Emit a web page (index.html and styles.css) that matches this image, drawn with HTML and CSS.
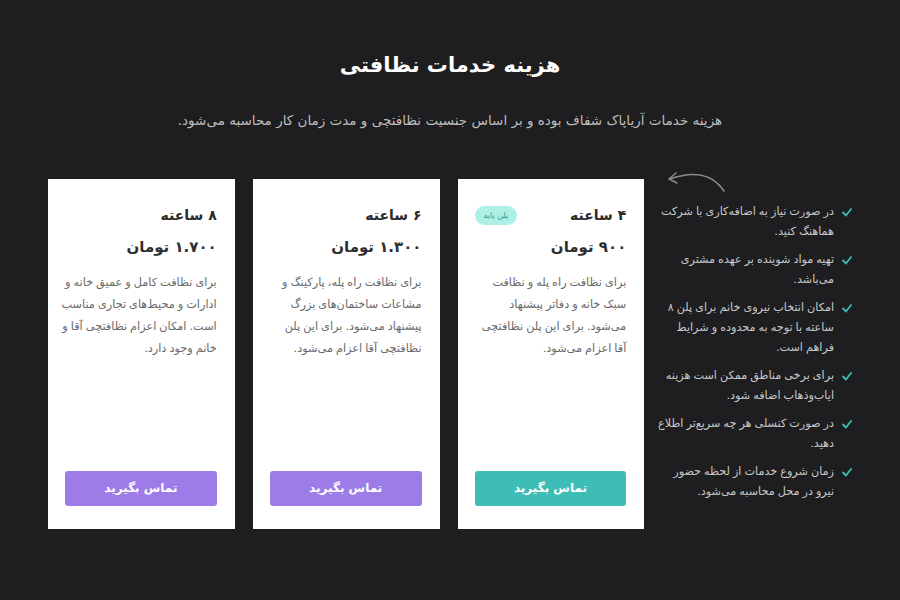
FILE: index.html
```html
<!DOCTYPE html>
<html lang="fa" dir="rtl">
<head>
<meta charset="utf-8">
<link rel="stylesheet" href="styles.css">
</head>
<body>
<div class="page">
  <h1 class="title">هزینه خدمات نظافتی</h1>
  <p class="subtitle">هزینه خدمات آریاپاک شفاف بوده و بر اساس جنسیت نظافتچی و مدت زمان کار محاسبه می‌شود.</p>
  <div class="row">
    <div class="notes">
      <svg class="arrow" width="70" height="30" viewBox="0 0 70 30">
        <path d="M62 24 C50 6 30 4 8 12" fill="none" stroke="#8a8a8a" stroke-width="1.6" stroke-linecap="round"/>
        <path d="M14 6 L7 12 L15 16" fill="none" stroke="#8a8a8a" stroke-width="1.6" stroke-linecap="round" stroke-linejoin="round"/>
      </svg>
      <ul class="list">
        <li><svg class="check" width="10" height="20" viewBox="0 0 10 20"><path d="M1 10.5 L4 13.5 L9 7" fill="none" stroke="#3dbdb0" stroke-width="1.8" stroke-linecap="round" stroke-linejoin="round"/></svg><span>در صورت نیاز به اضافه‌کاری با شرکت هماهنگ کنید.</span></li>
        <li><svg class="check" width="10" height="20" viewBox="0 0 10 20"><path d="M1 10.5 L4 13.5 L9 7" fill="none" stroke="#3dbdb0" stroke-width="1.8" stroke-linecap="round" stroke-linejoin="round"/></svg><span>تهیه مواد شوینده بر عهده مشتری می‌باشد.</span></li>
        <li><svg class="check" width="10" height="20" viewBox="0 0 10 20"><path d="M1 10.5 L4 13.5 L9 7" fill="none" stroke="#3dbdb0" stroke-width="1.8" stroke-linecap="round" stroke-linejoin="round"/></svg><span>امکان انتخاب نیروی خانم برای پلن ۸ ساعته با توجه به محدوده و شرایط فراهم است.</span></li>
        <li><svg class="check" width="10" height="20" viewBox="0 0 10 20"><path d="M1 10.5 L4 13.5 L9 7" fill="none" stroke="#3dbdb0" stroke-width="1.8" stroke-linecap="round" stroke-linejoin="round"/></svg><span>برای برخی مناطق ممکن است هزینه ایاب‌وذهاب اضافه شود.</span></li>
        <li><svg class="check" width="10" height="20" viewBox="0 0 10 20"><path d="M1 10.5 L4 13.5 L9 7" fill="none" stroke="#3dbdb0" stroke-width="1.8" stroke-linecap="round" stroke-linejoin="round"/></svg><span>در صورت کنسلی هر چه سریع‌تر اطلاع دهید.</span></li>
        <li><svg class="check" width="10" height="20" viewBox="0 0 10 20"><path d="M1 10.5 L4 13.5 L9 7" fill="none" stroke="#3dbdb0" stroke-width="1.8" stroke-linecap="round" stroke-linejoin="round"/></svg><span>زمان شروع خدمات از لحظه حضور نیرو در محل محاسبه می‌شود.</span></li>
      </ul>
    </div>
    <div class="card">
      <div class="head"><h3 class="hours">۴ ساعته</h3><span class="badge">پلن پایه</span></div>
      <div class="price">۹۰۰ تومان</div>
      <p class="desc">برای نظافت راه پله و نظافت<br>سبک خانه و دفاتر پیشنهاد<br>می‌شود. برای این پلن نظافتچی<br>آقا اعزام می‌شود.</p>
      <a class="btn teal">تماس بگیرید</a>
    </div>
    <div class="card">
      <div class="head"><h3 class="hours">۶ ساعته</h3></div>
      <div class="price">۱.۳۰۰ تومان</div>
      <p class="desc">برای نظافت راه پله، پارکینگ و<br>مشاعات ساختمان‌های بزرگ<br>پیشنهاد می‌شود. برای این پلن<br>نظافتچی آقا اعزام می‌شود.</p>
      <a class="btn purple">تماس بگیرید</a>
    </div>
    <div class="card">
      <div class="head"><h3 class="hours">۸ ساعته</h3></div>
      <div class="price">۱.۷۰۰ تومان</div>
      <p class="desc">برای نظافت کامل و عمیق خانه و<br>ادارات و محیط‌های تجاری مناسب<br>است. امکان اعزام نظافتچی آقا و<br>خانم وجود دارد.</p>
      <a class="btn purple">تماس بگیرید</a>
    </div>
  </div>
</div>
</body>
</html>
```
FILE: styles.css
```css
html, body {
  margin: 0;
  padding: 0;
  background: #1e1e20;
}
body {
  font-family: "DejaVu Sans", "Noto Sans", sans-serif;
  direction: rtl;
}
.page {
  width: 900px;
  height: 600px;
  padding-top: 40px;
  box-sizing: border-box;
}
.title {
  margin: 0;
  text-align: center;
  color: #ffffff;
  font-size: 21px;
  line-height: 50px;
  font-weight: bold;
}
.subtitle {
  margin: 18px 0 0;
  text-align: center;
  color: #bdbdbd;
  font-size: 13.5px;
  line-height: 24px;
}
.row {
  display: flex;
  flex-direction: row;
  gap: 18px;
  margin: 47px 48px 0 48px;
  align-items: stretch;
  height: 350px;
}
.notes {
  position: relative;
  width: 196px;
  margin-left: -6px;
  padding-top: 23px;
  box-sizing: border-box;
}
.arrow {
  position: absolute;
  top: -12px;
  left: 6px;
}
.list {
  list-style: none;
  margin: 0;
  padding: 0;
  display: flex;
  flex-direction: column;
  gap: 8px;
}
.list li {
  display: flex;
  gap: 8px;
  color: #c8c8c8;
  font-size: 11.2px;
  line-height: 20px;
  word-spacing: -0.5px;
}
.check {
  flex: none;
  display: block;
}
.card {
  width: 187px;
  background: #ffffff;
  padding: 24px 18px 23px 17px;
  box-sizing: border-box;
  display: flex;
  flex-direction: column;
}
.head {
  display: flex;
  justify-content: space-between;
  align-items: center;
  height: 24px;
}
.hours {
  margin: 0;
  font-size: 14px;
  font-weight: bold;
  color: #2a2a2a;
  line-height: 24px;
}
.badge {
  background: #aef0e6;
  color: #2a9d92;
  font-size: 8px;
  line-height: 19px;
  padding: 0 9px;
  border-radius: 10px;
}
.price {
  margin-top: 8px;
  font-size: 15px;
  font-weight: bold;
  color: #2f2f2f;
  line-height: 24px;
}
.desc {
  margin: 13px 0 0 -6px;
  font-size: 11.3px;
  line-height: 22px;
  color: #6a6a6a;
  word-spacing: -0.6px;
  white-space: nowrap;
}
.btn {
  margin-top: auto;
  display: block;
  height: 35px;
  line-height: 35px;
  text-align: center;
  color: #ffffff;
  font-size: 12px;
  font-weight: bold;
  border-radius: 3px;
}
.teal { background: #3dbdb5; }
.purple { background: #9d7ce8; }
```
